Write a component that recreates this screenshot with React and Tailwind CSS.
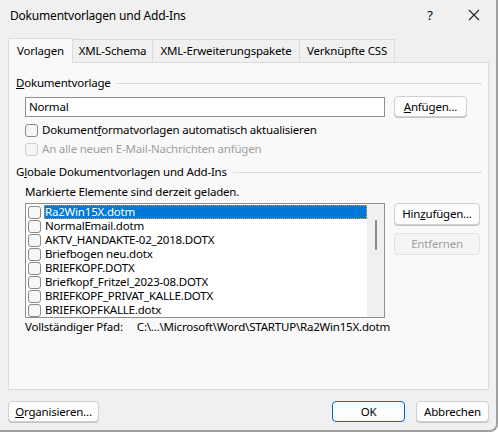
import React from 'react';

const FILES = [
  'Ra2Win15X.dotm',
  'NormalEmail.dotm',
  'AKTV_HANDAKTE-02_2018.DOTX',
  'Briefbogen neu.dotx',
  'BRIEFKOPF.DOTX',
  'Briefkopf_Fritzel_2023-08.DOTX',
  'BRIEFKOPF_PRIVAT_KALLE.DOTX',
  'BRIEFKOPFKALLE.dotx',
];

function Box({ disabled }) {
  return (
    <span
      className={
        'inline-block w-[13px] h-[13px] rounded-[3px] border shrink-0 ' +
        (disabled ? 'border-[#cfcfcf] bg-[#f5f5f5]' : 'border-[#8a8a8a] bg-[#f7f7f7]')
      }
    />
  );
}

function Button({ children, disabled, primary, className = '' }) {
  return (
    <div
      className={
        'flex items-center justify-center rounded-[4px] border ' +
        (disabled
          ? 'border-[#e2e2e2] bg-[#f5f5f5] text-[#a0a0a0] '
          : primary
          ? 'border-[#0067c0] bg-[#fdfdfd] text-black '
          : 'border-[#d0d0d0] bg-[#fdfdfd] text-black shadow-[0_1px_0_#c4c4c4] ') +
        className
      }
    >
      {children}
    </div>
  );
}

function Section({ children }) {
  return (
    <div className="flex items-center gap-[6px] pr-[6px]">
      <span className="whitespace-nowrap">{children}</span>
      <div className="flex-1 h-px bg-[#dcdcdc]" />
    </div>
  );
}

export default function App() {
  return (
    <div
      className="w-[498px] h-[432px] bg-[#f0f0f0] border-r-2 border-b-2 border-[#a0a0a0] rounded-br-[8px] text-[11.5px] tracking-[-0.2px] leading-[14px] text-black overflow-hidden"
      style={{ fontFamily: '"Noto Sans", "Open Sans", sans-serif' }}
    >
      <div className="h-[30px] flex items-center pl-[10px] pr-[16px]">
        <span className="flex-1 pt-[1px] text-[12px]">Dokumentvorlagen und Add-Ins</span>
        <span className="w-[20px] text-center mr-[28px] text-[13px]">?</span>
        <svg width="12" height="12" viewBox="0 0 12 12">
          <path d="M1 1 L11 11 M11 1 L1 11" stroke="#222" strokeWidth="1.1" />
        </svg>
      </div>

      <div className="pl-[8px] pt-[8px]">
        <div className="flex items-end h-[24px]">
          <div className="h-[25px] w-[65px] flex items-center justify-center bg-[#f9f9f9] border border-b-0 border-[#dcdcdc] relative top-[1px] z-10">
            Vorlagen
          </div>
          <div className="h-[23px] w-[80px] flex items-center justify-center border-t border-r border-[#dcdcdc]">
            XML-Schema
          </div>
          <div className="h-[23px] w-[147px] flex items-center justify-center border-t border-r border-[#dcdcdc]">
            XML-Erweiterungspakete
          </div>
          <div className="h-[23px] w-[95px] flex items-center justify-center border-t border-r border-[#dcdcdc]">
            Verknüpfte CSS
          </div>
        </div>

        <div className="w-[481px] h-[328px] bg-[#f9f9f9] border border-[#dcdcdc] pl-[7px] pt-[13px]">
          <Section>
            <u>D</u>okumentvorlage
          </Section>

          <div className="flex items-center mt-[6px] pl-[9px]">
            <div className="w-[360px] h-[20px] bg-white border border-[#8f8f8f] flex items-center pl-[3px]">
              Normal
            </div>
            <Button className="ml-[9px] w-[73px] h-[21px]">
              <span>
                <u>A</u>nfügen...
              </span>
            </Button>
          </div>

          <div className="flex items-center gap-[4px] pl-[9px] mt-[6px] h-[14px]">
            <Box />
            <span>
              Dokument<u>f</u>ormatvorlagen automatisch aktualisieren
            </span>
          </div>
          <div className="flex items-center gap-[4px] pl-[9px] mt-[5px] h-[14px] text-[#a0a0a0]">
            <Box disabled />
            <span>An alle neuen E-Mail-Nachrichten anfügen</span>
          </div>

          <div className="mt-[9px]">
            <Section>
              G<u>l</u>obale Dokumentvorlagen und Add-Ins
            </Section>
          </div>

          <div className="pl-[9px] mt-[6px]">Markierte Elemente sind derzeit geladen.</div>

          <div className="flex items-start pl-[9px] mt-[4px]">
            <div className="w-[360px] h-[115px] bg-white border border-[#8f8f8f] flex">
              <div className="flex-1 pt-[1px]">
                {FILES.map((f, i) => (
                  <div key={f} className="flex items-center h-[14px] pl-[2px]">
                    <Box />
                    <span
                      className={
                        'ml-[3px] h-[14px] pl-[1px] flex items-center ' +
                        (i === 0
                          ? 'flex-1 bg-[#0078d7] text-white outline outline-1 outline-dotted outline-[#e8a33c] -outline-offset-1'
                          : '')
                      }
                    >
                      {f}
                    </span>
                  </div>
                ))}
              </div>
              <div className="w-[17px] bg-[#f0f0f0] flex justify-center pt-[16px]">
                <div className="w-[2px] h-[30px] rounded-full bg-[#8a8a8a]" />
              </div>
            </div>
            <div className="ml-[9px] flex flex-col gap-[8px]">
              <Button className="w-[86px] h-[22px]">
                <span>
                  Hin<u>z</u>ufügen...
                </span>
              </Button>
              <Button disabled className="w-[86px] h-[22px]">
                Entfernen
              </Button>
            </div>
          </div>

          <div className="flex pl-[9px] mt-[2px]">
            <span>Vollständiger Pfad:</span>
            <span className="ml-[14px]">C:\...\Microsoft\Word\STARTUP\Ra2Win15X.dotm</span>
          </div>
        </div>
      </div>

      <div className="flex items-center pl-[8px] mt-[11px]">
        <Button className="w-[91px] h-[21px]">
          <span>
            <u>O</u>rganisieren...
          </span>
        </Button>
        <div className="flex-1" />
        <Button primary className="w-[73px] h-[21px]">
          OK
        </Button>
        <Button className="w-[73px] h-[21px] ml-[11px] mr-[7px]">
          Abbrechen
        </Button>
      </div>
    </div>
  );
}
